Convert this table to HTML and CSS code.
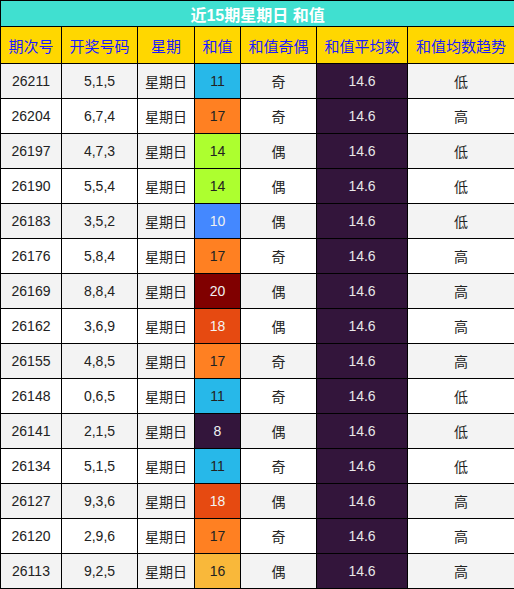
FILE: index.html
```html
<!DOCTYPE html>
<html lang="zh">
<head>
<meta charset="utf-8">
<link rel="stylesheet" href="styles.css">
</head>
<body>
<table class="t">
  <colgroup>
    <col class="c1"><col class="c2"><col class="c3"><col class="c4"><col class="c5"><col class="c6"><col class="c7">
  </colgroup>
  <tr class="title"><td colspan="7">近15期星期日 和值</td></tr>
  <tr class="head"><th>期次号</th><th>开奖号码</th><th>星期</th><th>和值</th><th>和值奇偶</th><th>和值平均数</th><th>和值均数趋势</th></tr>
  <tr class="odd"><td>26211</td><td>5,1,5</td><td>星期日</td><td class="s s11">11</td><td>奇</td><td class="avg">14.6</td><td>低</td></tr>
  <tr class="even"><td>26204</td><td>6,7,4</td><td>星期日</td><td class="s s17">17</td><td>奇</td><td class="avg">14.6</td><td>高</td></tr>
  <tr class="odd"><td>26197</td><td>4,7,3</td><td>星期日</td><td class="s s14">14</td><td>偶</td><td class="avg">14.6</td><td>低</td></tr>
  <tr class="even"><td>26190</td><td>5,5,4</td><td>星期日</td><td class="s s14">14</td><td>偶</td><td class="avg">14.6</td><td>低</td></tr>
  <tr class="odd"><td>26183</td><td>3,5,2</td><td>星期日</td><td class="s s10">10</td><td>偶</td><td class="avg">14.6</td><td>低</td></tr>
  <tr class="even"><td>26176</td><td>5,8,4</td><td>星期日</td><td class="s s17">17</td><td>奇</td><td class="avg">14.6</td><td>高</td></tr>
  <tr class="odd"><td>26169</td><td>8,8,4</td><td>星期日</td><td class="s s20">20</td><td>偶</td><td class="avg">14.6</td><td>高</td></tr>
  <tr class="even"><td>26162</td><td>3,6,9</td><td>星期日</td><td class="s s18">18</td><td>偶</td><td class="avg">14.6</td><td>高</td></tr>
  <tr class="odd"><td>26155</td><td>4,8,5</td><td>星期日</td><td class="s s17">17</td><td>奇</td><td class="avg">14.6</td><td>高</td></tr>
  <tr class="even"><td>26148</td><td>0,6,5</td><td>星期日</td><td class="s s11">11</td><td>奇</td><td class="avg">14.6</td><td>低</td></tr>
  <tr class="odd"><td>26141</td><td>2,1,5</td><td>星期日</td><td class="s s8">8</td><td>偶</td><td class="avg">14.6</td><td>低</td></tr>
  <tr class="even"><td>26134</td><td>5,1,5</td><td>星期日</td><td class="s s11">11</td><td>奇</td><td class="avg">14.6</td><td>低</td></tr>
  <tr class="odd"><td>26127</td><td>9,3,6</td><td>星期日</td><td class="s s18">18</td><td>偶</td><td class="avg">14.6</td><td>高</td></tr>
  <tr class="even"><td>26120</td><td>2,9,6</td><td>星期日</td><td class="s s17">17</td><td>奇</td><td class="avg">14.6</td><td>高</td></tr>
  <tr class="odd"><td>26113</td><td>9,2,5</td><td>星期日</td><td class="s s16">16</td><td>偶</td><td class="avg">14.6</td><td>高</td></tr>
</table>
</body>
</html>
```
FILE: styles.css
```css
html, body {
  margin: 0;
  padding: 0;
  background: #ffffff;
}
.t {
  border-collapse: collapse;
  table-layout: fixed;
  width: 514px;
  font-family: "Liberation Sans", Arial, "Noto Sans CJK SC", sans-serif;
  font-size: 14px;
  color: #222222;
}
.c1 { width: 61px; }
.c2 { width: 76px; }
.c3 { width: 57px; }
.c4 { width: 46px; }
.c5 { width: 76px; }
.c6 { width: 91px; }
.c7 { width: 107px; }
.t td, .t th {
  border: 1px solid #000000;
  text-align: center;
  padding: 0;
  font-weight: normal;
}
.title td {
  height: 25px;
  background: #40e0d0;
  color: #ffffff;
  font-weight: bold;
  font-size: 16px;
}
.head th {
  height: 36px;
  background: #ffd700;
  color: #1a1aff;
  font-size: 15px;
}
.odd td, .even td {
  height: 34px;
}
.odd td { background: #f3f3f3; }
.even td { background: #ffffff; }
.t td.avg {
  background: #33153b;
  color: #e8e8e8;
}
.t td.s11 { background: #27b8e9; }
.t td.s17 { background: #ff8022; }
.t td.s14 { background: #adff2f; }
.t td.s10 { background: #4488ff; color: #f0f0f0; }
.t td.s20 { background: #800000; color: #f0f0f0; }
.t td.s18 { background: #e64a11; color: #f4f4f4; }
.t td.s8 { background: #33153b; color: #f0f0f0; }
.t td.s16 { background: #f9b83a; }
```
